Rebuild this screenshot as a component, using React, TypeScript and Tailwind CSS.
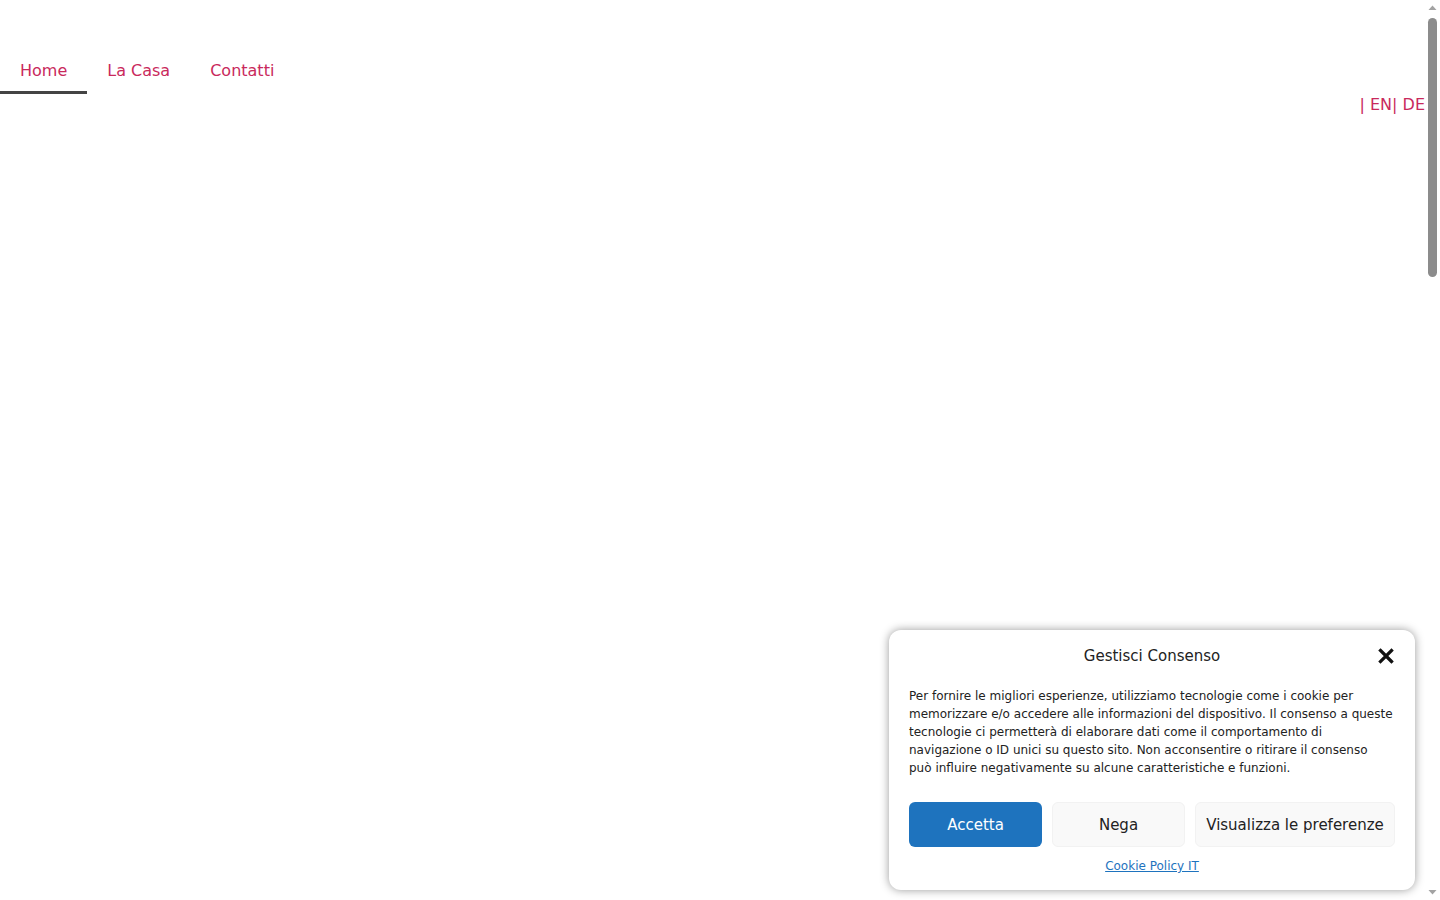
export default function App() {
  const font = { fontFamily: '"DejaVu Sans", sans-serif' };
  return (
    <div style={font} className="h-screen overflow-hidden flex bg-white text-[#222]">
      <div className="flex-1 relative">
        <header className="pt-[47px]">
          <nav className="flex">
            <a className="px-5 pt-[12px] pb-[8px] text-[16px] leading-[24px] text-[#c9295c] border-b-[3px] border-[#444]">Home</a>
            <a className="px-5 pt-[12px] pb-[8px] text-[16px] leading-[24px] text-[#c9295c] border-b-[3px] border-transparent">La Casa</a>
            <a className="px-5 pt-[12px] pb-[8px] text-[16px] leading-[24px] text-[#c9295c] border-b-[3px] border-transparent">Contatti</a>
          </nav>
          <div className="flex justify-end -mt-[1px]">
            <span className="text-[16px] leading-[24px] text-[#c9295c]">| EN| DE</span>
          </div>
        </header>

        <div className="absolute right-[10px] bottom-[10px] w-[526px] h-[260px] bg-white rounded-[12px] shadow-[0_0_10px_rgba(0,0,0,0.4)] px-5 pt-[13px]">
          <div className="relative flex justify-center items-center h-[26px]">
            <span className="text-[15px] leading-[26px] text-[#222]">Gestisci Consenso</span>
            <svg className="absolute right-[1px] top-[5px]" width="16" height="16" viewBox="0 0 16 16">
              <path d="M2.5 2.5 L13.5 13.5 M13.5 2.5 L2.5 13.5" stroke="#111" strokeWidth="3.2" strokeLinecap="square" />
            </svg>
          </div>
          <p className="mt-[18px] w-[484px] text-[12px] leading-[18px] text-[#222]">
            Per fornire le migliori esperienze, utilizziamo tecnologie come i cookie per memorizzare e/o accedere alle informazioni del dispositivo. Il consenso a queste tecnologie ci permetterà di elaborare dati come il comportamento di navigazione o ID unici su questo sito. Non acconsentire o ritirare il consenso può influire negativamente su alcune caratteristiche e funzioni.
          </p>
          <div className="mt-[25px] flex gap-[10px]">
            <button className="w-[133px] h-[45px] pt-[2px] rounded-[6px] bg-[#1e73be] text-white text-[15px]" style={font}>Accetta</button>
            <button className="w-[133px] h-[45px] pt-[2px] rounded-[6px] bg-[#f9f9f9] border border-[#f2f2f2] text-[#222] text-[15px]" style={font}>Nega</button>
            <button className="w-[200px] h-[45px] pt-[2px] rounded-[6px] bg-[#f9f9f9] border border-[#f2f2f2] text-[#222] text-[15px]" style={font}>Visualizza le preferenze</button>
          </div>
          <div className="mt-[10px] flex justify-center">
            <a className="text-[12px] leading-[18px] text-[#1e73be] underline">Cookie Policy IT</a>
          </div>
        </div>
      </div>

      <div className="w-[15px] h-full bg-white flex flex-col items-center">
        <svg width="15" height="15" viewBox="0 0 15 15" className="shrink-0">
          <path d="M3.5 10 L7.5 5.5 L11.5 10 Z" fill="#a3a3a3" />
        </svg>
        <div className="mt-[3px] w-[9px] h-[259px] rounded-full bg-[#8c8c8c]" />
        <div className="flex-1" />
        <svg width="15" height="15" viewBox="0 0 15 15" className="shrink-0">
          <path d="M3.5 5 L7.5 9.5 L11.5 5 Z" fill="#a3a3a3" />
        </svg>
      </div>
    </div>
  );
}
